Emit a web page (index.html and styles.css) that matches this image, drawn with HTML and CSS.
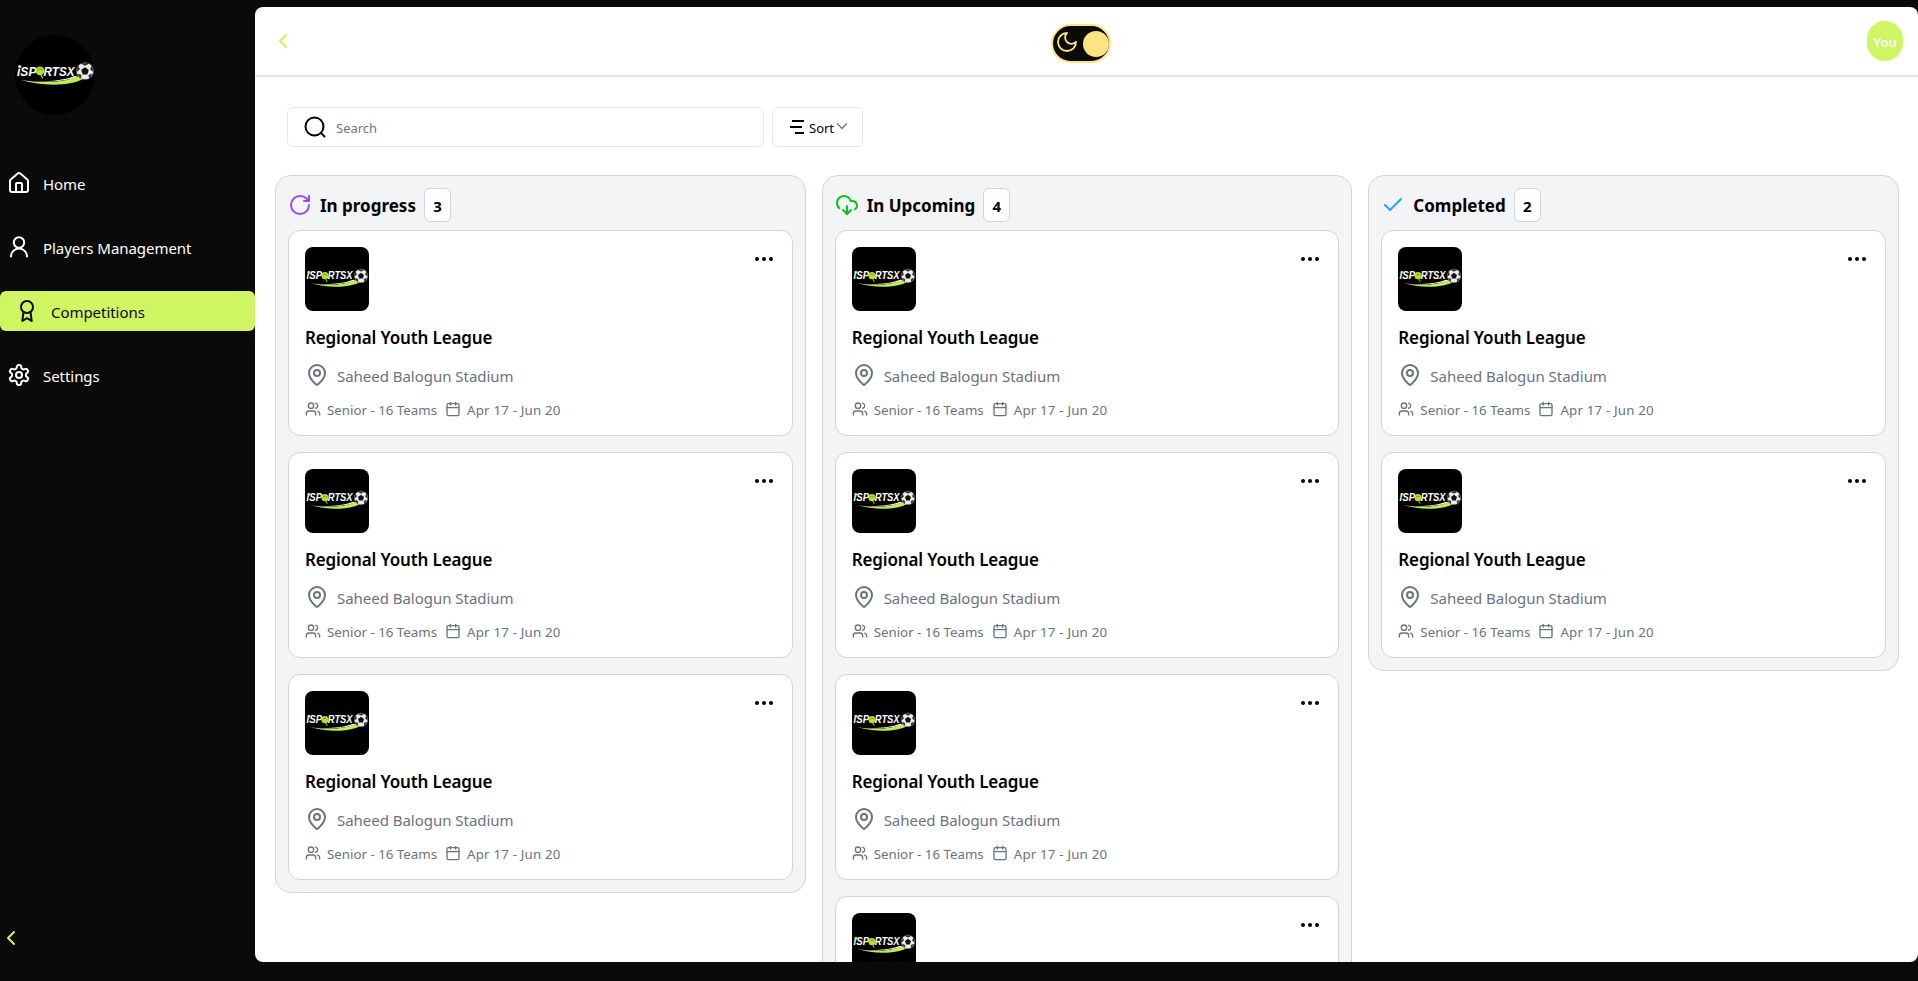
FILE: index.html
```html
<!DOCTYPE html>
<html lang="en">
<head>
<meta charset="utf-8">
<title>iSportsX - Competitions</title>
<link rel="stylesheet" href="styles.css">
</head>
<body>
<svg class="defs" width="0" height="0" aria-hidden="true">
  <symbol id="logo" viewBox="0 0 80 80">
    <text class="logo-text" x="2" y="40.500" textLength="19.500" lengthAdjust="spacingAndGlyphs">iSP</text>
    <text class="logo-text" x="28.500" y="40.500" textLength="31" lengthAdjust="spacingAndGlyphs">RTSX</text>
    <circle cx="4.800" cy="31.600" r="1.600" fill="#cff562"/>
    <circle cx="25" cy="35.800" r="4.400" fill="#b5e02f"/>
    <path d="M25.400 39l2.400 4.400" stroke="#b5e02f" stroke-width="1.200"/>
    <path d="M22.400 35.500c1.500-2 4-2 5.200 0" stroke="#55701a" stroke-width=".8" fill="none"/>
    <path d="M6 45c19 2.800 40 3.500 57-3.500l7 1.500C55 52 27 51 6 45z" fill="#c1ee4b"/>
    <path d="M22 46.300c16 1 31-.6 41-4.800l-3-.5c-10 4-24 5.500-38 5.300z" fill="#fff"/>
    <circle cx="70" cy="36" r="8.600" fill="#ececec" stroke="#555" stroke-width=".6"/>
    <path d="M70 32.200l3.800 2.800-1.500 4.400h-4.600L66.200 35z" fill="#111"/>
    <path d="M66.500 28.400h7L70 30.300zM76.800 31.500l1.300 4.800-2.500-2zM63.200 31.500l-1.300 4.800 2.500-2zM74.500 43l2.300-3.800-2.900 1zM65.500 43l-2.300-3.800 2.900 1z" fill="#222" stroke="#222" stroke-width=".8"/>
  </symbol>
  <symbol id="house" viewBox="0 0 24 24"><path d="M15 21v-8a1 1 0 0 0-1-1h-4a1 1 0 0 0-1 1v8"/><path d="M3 10a2 2 0 0 1 .709-1.528l7-6a2 2 0 0 1 2.582 0l7 6A2 2 0 0 1 21 10v9a2 2 0 0 1-2 2H5a2 2 0 0 1-2-2z"/></symbol>
  <symbol id="user" viewBox="0 0 24 24"><circle cx="12" cy="7.500" r="5.200"/><path d="M4 21.500a8 8 0 0 1 16 0"/></symbol>
  <symbol id="award" viewBox="0 0 24 24"><circle cx="12" cy="8" r="6"/><path d="M8.500 13.200L7.300 22 12 19.200 16.700 22 15.500 13.200"/></symbol>
  <symbol id="settings" viewBox="0 0 24 24"><path d="M12.220 2h-.44a2 2 0 0 0-2 2v.18a2 2 0 0 1-1 1.730l-.43.25a2 2 0 0 1-2 0l-.15-.08a2 2 0 0 0-2.730.73l-.22.38a2 2 0 0 0 .73 2.730l.15.1a2 2 0 0 1 1 1.720v.51a2 2 0 0 1-1 1.740l-.15.09a2 2 0 0 0-.73 2.730l.22.38a2 2 0 0 0 2.730.73l.15-.08a2 2 0 0 1 2 0l.43.25a2 2 0 0 1 1 1.730V20a2 2 0 0 0 2 2h.44a2 2 0 0 0 2-2v-.18a2 2 0 0 1 1-1.730l.43-.25a2 2 0 0 1 2 0l.15.08a2 2 0 0 0 2.730-.73l.22-.39a2 2 0 0 0-.73-2.730l-.15-.08a2 2 0 0 1-1-1.740v-.5a2 2 0 0 1 1-1.740l.15-.09a2 2 0 0 0 .73-2.730l-.22-.38a2 2 0 0 0-2.730-.73l-.15.08a2 2 0 0 1-2 0l-.43-.25a2 2 0 0 1-1-1.730V4a2 2 0 0 0-2-2z"/><circle cx="12" cy="12" r="3"/></symbol>
  <symbol id="chevron" viewBox="0 0 24 24"><path d="M15 18l-6-6 6-6"/></symbol>
  <symbol id="search" viewBox="0 0 24 24"><circle cx="11.500" cy="11.500" r="9"/><path d="M21.500 21.500l-3.500-3.500"/></symbol>
  <symbol id="refresh" viewBox="0 0 24 24"><path d="M21 12a9 9 0 1 1-9-9c2.520 0 4.930 1 6.740 2.740L21 8"/><path d="M21 3v5h-5"/></symbol>
  <symbol id="cloud" viewBox="0 0 24 24"><path d="M12 13v8l-4-4"/><path d="M12 21l4-4"/><path d="M4.393 15.269A7 7 0 1 1 15.710 8h1.790a4.500 4.500 0 0 1 2.436 8.284"/></symbol>
  <symbol id="check" viewBox="0 0 24 24"><path d="M20 6L9 17l-5-5"/></symbol>
  <symbol id="pin" viewBox="0 0 24 24"><path d="M20 10c0 4.993-5.539 10.193-7.399 11.799a1 1 0 0 1-1.202 0C9.539 20.193 4 14.993 4 10a8 8 0 0 1 16 0"/><circle cx="12" cy="10" r="3"/></symbol>
  <symbol id="users" viewBox="0 0 24 24"><path d="M16 21v-2a4 4 0 0 0-4-4H6a4 4 0 0 0-4 4v2"/><circle cx="9" cy="7" r="4"/><path d="M22 21v-2a4 4 0 0 0-3-3.870"/><path d="M16 3.130a4 4 0 0 1 0 7.750"/></symbol>
  <symbol id="calendar" viewBox="0 0 24 24"><path d="M8 2v4M16 2v4M3 10h18"/><rect x="3" y="4" width="18" height="18" rx="2"/></symbol>
  <symbol id="moon" viewBox="0 0 24 24"><path d="M12 3a6 6 0 0 0 9 9 9 9 0 1 1-9-9z"/></symbol>
</svg>

<div class="app">
  <aside class="sidebar">
    <svg class="brand"><use href="#logo"/></svg>
    <nav class="nav">
      <a class="nav-item"><svg class="icon"><use href="#house"/></svg><span>Home</span></a>
      <a class="nav-item"><svg class="icon"><use href="#user"/></svg><span>Players Management</span></a>
      <a class="nav-item active"><svg class="icon"><use href="#award"/></svg><span>Competitions</span></a>
      <a class="nav-item"><svg class="icon"><use href="#settings"/></svg><span>Settings</span></a>
    </nav>
    <svg class="icon collapse"><use href="#chevron"/></svg>
  </aside>

  <main class="main">
    <header class="topbar">
      <svg class="icon back"><use href="#chevron"/></svg>
      <div class="toggle"><svg class="icon moon"><use href="#moon"/></svg><span class="knob"></span></div>
      <div class="avatar">You</div>
    </header>

    <div class="tools">
      <div class="search"><svg class="icon"><use href="#search"/></svg><span>Search</span></div>
      <div class="sort">
        <svg class="sort-lines" viewBox="0 0 16 16"><path d="M3 2h12M1 8h12M6 14h9"/></svg>
        <span>Sort</span>
        <svg class="sort-caret" viewBox="0 0 10 10"><path d="M1 3l4 4 4-4"/></svg>
      </div>
    </div>

    <div class="board" id="board"></div>
  </main>
</div>
<script src="board.js"></script>
</body>
</html>
```

FILE: styles.css
```css
* { box-sizing: border-box; }

body {
  margin: 0;
  background: #0a0a08;
  font-family: "Noto Sans", "Open Sans", sans-serif;
  font-size: 15px;
  line-height: 24px;
  color: #000;
  overflow: hidden;
}

.defs { position: absolute; }

.icon {
  width: 24px;
  height: 24px;
  flex: none;
  display: block;
  fill: none;
  stroke: currentColor;
  stroke-width: 2;
  stroke-linecap: round;
  stroke-linejoin: round;
}

.logo-text {
  font: italic 700 13px "Liberation Sans", sans-serif;
  fill: #fff;
  stroke: none;
}

.app {
  display: flex;
  height: 981px;
  padding: 7px 0 19px;
}

.sidebar {
  width: 255px;
  flex: none;
  display: flex;
  flex-direction: column;
  padding-top: 28px;
  color: #fff;
}

.brand {
  width: 80px;
  height: 80px;
  margin-left: 15px;
  border-radius: 50%;
  background: #000;
}

.nav {
  display: flex;
  flex-direction: column;
  gap: 24px;
  margin-top: 48px;
}

.nav-item {
  height: 40px;
  display: flex;
  align-items: center;
  gap: 12px;
  padding-left: 7px;
  border-radius: 6px;
}

.nav-item span { padding-top: 2px; white-space: nowrap; letter-spacing: -.05px; }

.nav-item.active {
  padding-left: 15px;
  background: #d0f562;
  color: #0a0a08;
}

.collapse {
  margin-top: auto;
  margin-bottom: 12px;
  margin-left: -1px;
  color: #d0f562;
}

.main {
  flex: 1;
  min-width: 0;
  background: #fff;
  border-radius: 8px;
  overflow: hidden;
}

.topbar {
  height: 68px;
  display: flex;
  align-items: center;
  justify-content: space-between;
  padding: 0 15px 0 16px;
  box-shadow: 0 1px 3px rgba(0, 0, 0, .2);
}

.back { color: #d0f562; stroke-width: 2.4; }

.toggle {
  width: 60px;
  height: 39px;
  margin: 5px 0 0;
  padding: 0 0 0 2px;
  display: flex;
  align-items: center;
  justify-content: space-between;
  border: 2px solid #ffe484;
  border-radius: 20px;
  background: #0a0a08;
  color: #ffe484;
}

.moon { margin-top: -3px; stroke-width: 1.8; }

.knob {
  width: 26px;
  height: 26px;
  border-radius: 50%;
  background: #ffe484;
}

.avatar {
  width: 36px;
  height: 40px;
  border-radius: 20px;
  background: #d0f562;
  color: #fff;
  font-size: 13px;
  font-weight: 600;
  line-height: 42px;
  text-align: center;
}

.tools {
  display: flex;
  gap: 8px;
  padding: 32px 0 0 32px;
  font-size: 13px;
}

.search, .sort {
  height: 40px;
  display: flex;
  align-items: center;
  border: 1px solid #e5e7eb;
  border-radius: 6px;
}

.search {
  width: 477px;
  padding-left: 15px;
  gap: 9px;
}

.search span { color: #757575; padding-top: 2px; }

.sort { width: 91px; padding-left: 16px; }
.sort span { width: 26px; padding-top: 2px; margin-left: 4px; }

.sort-lines {
  width: 16px;
  height: 16px;
  fill: none;
  stroke: #000;
  stroke-width: 2;
}

.sort-caret {
  width: 12px;
  height: 12px;
  margin: -2px 0 0 1px;
  fill: none;
  stroke: #777;
  stroke-width: 1.2;
}

.board {
  display: grid;
  grid-template-columns: repeat(3, 1fr);
  align-items: start;
  gap: 16px;
  padding: 28px 19px 0 20px;
}

.column {
  display: flex;
  flex-direction: column;
  gap: 16px;
  padding: 12px;
  border: 1px solid #d1d5db;
  border-radius: 16px;
  background: #f3f4f6;
}

.column-head {
  height: 34px;
  margin-bottom: -8px;
  display: flex;
  align-items: center;
  gap: 8px;
}

.column-head h2 {
  margin: 0;
  padding-top: 2px;
  font-size: 17px;
  line-height: 28px;
  font-weight: 700;
  white-space: nowrap;
}

.progress { color: #9747ff; }
.upcoming { color: #10c320; }
.completed { color: #22a2f8; }

.count {
  width: 27px;
  height: 34px;
  border: 1px solid #d1d5db;
  border-radius: 6px;
  background: #fff;
  font-weight: 700;
  line-height: 34px;
  text-align: center;
}

.card {
  height: 206px;
  padding: 16px;
  border: 1px solid #d1d5db;
  border-radius: 12px;
  background: #fff;
}

.card-top { display: flex; justify-content: space-between; }

.thumb { width: 64px; height: 64px; border-radius: 8px; background: #000; }

.dots { width: 24px; height: 24px; fill: #000; }

.card h3 {
  margin: 12px 0 0;
  font-size: 17px;
  line-height: 29px;
  font-weight: 600;
  letter-spacing: -.15px;
  white-space: nowrap;
}

.place, .meta { display: flex; align-items: center; color: #6b7280; white-space: nowrap; }

.place { height: 24px; margin-top: 11px; gap: 8px; }
.place span { padding-top: 2px; letter-spacing: -.03px; }

.meta { height: 20px; margin-top: 12px; font-size: 13.3px; line-height: 20px; }
.meta .icon { width: 16px; height: 16px; margin-right: 6px; }
.meta span { padding-top: 2px; }
.meta .date { margin-left: 8px; }
.meta .date + span { letter-spacing: .18px; }
```

FILE: board.js
```js
const columns = [
  { title: 'In progress', icon: 'refresh', tone: 'progress', count: 3 },
  { title: 'In Upcoming', icon: 'cloud', tone: 'upcoming', count: 4 },
  { title: 'Completed', icon: 'check', tone: 'completed', count: 2 }
];

const card = `
  <article class="card">
    <div class="card-top">
      <svg class="thumb"><use href="#logo"/></svg>
      <svg class="dots" viewBox="0 0 24 24"><circle cx="5" cy="12" r="2"/><circle cx="12" cy="12" r="2"/><circle cx="19" cy="12" r="2"/></svg>
    </div>
    <h3>Regional Youth League</h3>
    <div class="place"><svg class="icon"><use href="#pin"/></svg><span>Saheed Balogun Stadium</span></div>
    <div class="meta">
      <svg class="icon"><use href="#users"/></svg><span>Senior - 16 Teams</span>
      <svg class="icon date"><use href="#calendar"/></svg><span>Apr 17 - Jun 20</span>
    </div>
  </article>`;

document.getElementById('board').innerHTML = columns.map(c => `
  <section class="column">
    <div class="column-head">
      <svg class="icon ${c.tone}"><use href="#${c.icon}"/></svg>
      <h2>${c.title}</h2>
      <span class="count">${c.count}</span>
    </div>
    ${card.repeat(c.count)}
  </section>`).join('');
```
